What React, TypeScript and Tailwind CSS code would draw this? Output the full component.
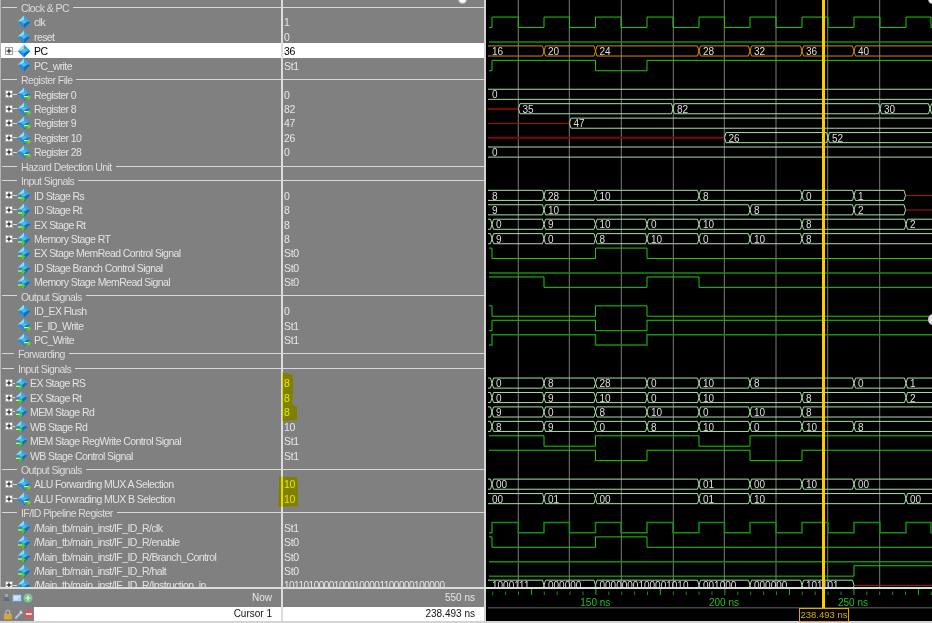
import React from 'react';

type NameRow = {
    label: string;
    group?: boolean;
    groupClass?: string;
    value?: string;
    icon?: 'plain' | 'out' | 'in';
    expand?: boolean;
    shift?: boolean;
    selected?: boolean;
};

const rows: NameRow[] = [
    { label: 'Clock & PC', group: true },
    { label: 'clk', value: '1', icon: 'plain' },
    { label: 'reset', value: '0', icon: 'plain' },
    { label: 'PC', value: '36', icon: 'plain', expand: true, selected: true },
    { label: 'PC_write', value: 'St1', icon: 'plain' },
    { label: 'Register File', group: true },
    { label: 'Register 0', value: '0', icon: 'out', expand: true },
    { label: 'Register 8', value: '82', icon: 'out', expand: true },
    { label: 'Register 9', value: '47', icon: 'out', expand: true },
    { label: 'Register 10', value: '26', icon: 'out', expand: true },
    { label: 'Register 28', value: '0', icon: 'out', expand: true },
    { label: 'Hazard Detection Unit', group: true },
    { label: 'Input Signals', group: true },
    { label: 'ID Stage Rs', value: '0', icon: 'in', expand: true },
    { label: 'ID Stage Rt', value: '8', icon: 'in', expand: true },
    { label: 'EX Stage Rt', value: '8', icon: 'in', expand: true },
    { label: 'Memory Stage RT', value: '8', icon: 'in', expand: true },
    { label: 'EX Stage MemRead Control Signal', value: 'St0', icon: 'in' },
    { label: 'ID Stage Branch Control Signal', value: 'St0', icon: 'in' },
    { label: 'Memory Stage MemRead Signal', value: 'St0', icon: 'in' },
    { label: 'Output Signals', group: true },
    { label: 'ID_EX Flush', value: '0', icon: 'plain' },
    { label: 'IF_ID_Write', value: 'St1', icon: 'out' },
    { label: 'PC_Write', value: 'St1', icon: 'out' },
    { label: 'Forwarding', group: true, groupClass: 'w-[12px]' },
    { label: 'Input Signals', group: true, groupClass: 'w-[12px]' },
    { label: 'EX Stage RS', value: '8', icon: 'in', expand: true, shift: true },
    { label: 'EX Stage Rt', value: '8', icon: 'in', expand: true, shift: true },
    { label: 'MEM Stage Rd', value: '8', icon: 'in', expand: true, shift: true },
    { label: 'WB Stage Rd', value: '10', icon: 'in', expand: true, shift: true },
    { label: 'MEM Stage RegWrite Control Signal', value: 'St1', icon: 'in', shift: true },
    { label: 'WB Stage Control Signal', value: 'St1', icon: 'in', shift: true },
    { label: 'Output Signals', group: true },
    { label: 'ALU Forwarding MUX A Selection', value: '10', icon: 'out', expand: true },
    { label: 'ALU Forwrading MUX B Selection', value: '10', icon: 'out', expand: true },
    { label: 'IF/ID Pipeline Register', group: true },
    { label: '/Main_tb/main_inst/IF_ID_R/clk', value: 'St1', icon: 'in' },
    { label: '/Main_tb/main_inst/IF_ID_R/enable', value: 'St0', icon: 'in' },
    { label: '/Main_tb/main_inst/IF_ID_R/Branch_Control', value: 'St0', icon: 'in' },
    { label: '/Main_tb/main_inst/IF_ID_R/halt', value: 'St0', icon: 'in' },
    { label: '/Main_tb/main_inst/IF_ID_R/Instruction_in', value: '10110100001000100001100000100000', icon: 'in', expand: true },
];

// half clock edges, px
const E = [492, 518.3, 544, 569.5, 595.5, 621, 647, 673, 699, 724.5, 750, 776, 802, 828, 854, 880, 906, 931];
const GRID = [518.3, 569.3, 621.3, 673.3, 724.3, 776, 827.7, 879.7];
const rowY = (row: number) => 14.44 * row + 7.2;

type Bit = { row: number; start: 0 | 1; at: number[]; dark?: boolean };
type Seg = [number, string];
type Bus = { row: number; segs: Seg[]; end?: number; orange?: boolean };
type Red = { row: number; from: number; to: number; thick?: boolean };

const bits: Bit[] = [
    { row: 1, start: 0, at: E },
    { row: 2, start: 0, at: [], dark: true },
    { row: 4, start: 0, at: [492, 595.5, 647] },
    { row: 17, start: 1, at: [492, 595.5, 647] },
    { row: 18, start: 0, at: [], dark: true },
    { row: 19, start: 1, at: [544, 647, 699] },
    { row: 21, start: 1, at: [492, 595.5, 647] },
    { row: 22, start: 0, at: [492, 595.5, 647] },
    { row: 23, start: 0, at: [492, 595.5, 647], dark: true },
    { row: 30, start: 1, at: [544, 595.5, 699, 750] },
    { row: 31, start: 1, at: [595.5, 647, 750, 802] },
    { row: 36, start: 0, at: E, dark: true },
    { row: 37, start: 1, at: [492, 595.5, 647] },
    { row: 38, start: 0, at: [], dark: true },
    { row: 39, start: 0, at: [854] },
];

const buses: Bus[] = [
    { row: 3, orange: true, segs: [[488, '16'], [544, '20'], [595.5, '24'], [699, '28'], [750, '32'], [802, '36'], [854, '40']] },
    { row: 6, segs: [[488, '0']] },
    { row: 7, segs: [[518.5, '35'], [673, '82'], [880, '30'], [930, '']] },
    { row: 8, segs: [[569.5, '47']] },
    { row: 9, segs: [[724.5, '26'], [828, '52']] },
    { row: 10, segs: [[488, '0']] },
    { row: 13, end: 905.5, segs: [[488, '8'], [544, '28'], [595.5, '10'], [699, '8'], [802, '0'], [854, '1']] },
    { row: 14, end: 905.5, segs: [[488, '9'], [544, '10'], [750, '8'], [854, '2']] },
    { row: 15, segs: [[488, ''], [492, '0'], [544, '9'], [595.5, '10'], [647, '0'], [699, '10'], [802, '8'], [906, '2']] },
    { row: 16, segs: [[488, ''], [492, '9'], [544, '0'], [595.5, '8'], [647, '10'], [699, '0'], [750, '10'], [802, '8']] },
    { row: 26, segs: [[488, ''], [492, '0'], [544, '8'], [595.5, '28'], [647, '0'], [699, '10'], [750, '8'], [854, '0'], [906, '1']] },
    { row: 27, segs: [[488, ''], [492, '0'], [544, '9'], [595.5, '10'], [647, '0'], [699, '10'], [802, '8'], [906, '2']] },
    { row: 28, segs: [[488, ''], [492, '9'], [544, '0'], [595.5, '8'], [647, '10'], [699, '0'], [750, '10'], [802, '8']] },
    { row: 29, segs: [[488, ''], [492, '8'], [544, '9'], [595.5, '0'], [647, '8'], [699, '10'], [750, '0'], [802, '10'], [854, '8']] },
    { row: 33, segs: [[488, ''], [492, '00'], [699, '01'], [750, '00'], [802, '10'], [854, '00']] },
    { row: 34, segs: [[488, '00'], [544, '01'], [595.5, '00'], [699, '01'], [750, '10'], [906, '00']] },
    { row: 40, end: 854, segs: [[488, '1000111'], [544, '000000'], [595.5, '0000000100001010'], [699, '001000'], [750, '000000'], [802, '101101']] },
];

const reds: Red[] = [
    { row: 7, from: 488, to: 518.5, thick: true },
    { row: 8, from: 488, to: 569.5 },
    { row: 9, from: 488, to: 724.5, thick: true },
    { row: 13, from: 906, to: 932 },
    { row: 14, from: 906, to: 932 },
    { row: 40, from: 854, to: 932 },
];

function bitPath({ row, start, at }: Bit) {
    const hi = rowY(row) - 4.6;
    const lo = rowY(row) + 5.8;
    let level = start;
    let d = `M489 ${level ? hi : lo}`;
    for (const x of at) {
        level = level ? 0 : 1;
        d += ` H${x} V${level ? hi : lo}`;
    }
    return d + ' H932';
}

function segPath(x0: number, x1: number, c: number, closeEnd: boolean) {
    const top = c - 4.6;
    const bot = c + 5.5;
    const mid = c + 0.5;
    const open = x0 <= 488;
    const a = open ? x0 : x0 + 1.5;
    const b = closeEnd ? x1 - 1.5 : x1;
    let d = open ? `M${a} ${top} H${b}` : `M${x0} ${mid} L${a} ${top} H${b}`;
    d += closeEnd ? ` L${x1} ${mid} L${b} ${bot}` : ` M${b} ${bot}`;
    d += ` H${a}`;
    if (!open) d += ` L${x0} ${mid}`;
    return d;
}

function Diamond({ kind, small }: { kind: 'plain' | 'out' | 'in'; small?: boolean }) {
    return (
        <svg viewBox="0 0 14 14" className={small ? 'h-[13px] w-[13px] shrink-0' : 'h-[14px] w-[14px] shrink-0'}>
            <polygon points="7,0.5 7,5 3.5,6.5 0.5,7" fill="#8adcf8" />
            <polygon points="7,0.5 13.5,7 10.5,6.5 7,5" fill="#2ea8ea" />
            <polygon points="7,5 10.5,6.5 7,9 3.5,6.5" fill="#45bdf2" />
            <polygon points="0.5,7 3.5,6.5 7,9 7,13.5" fill="#1b90dc" />
            <polygon points="13.5,7 10.5,6.5 7,9 7,13.5" fill="#0f6fc0" />
            {kind === 'out' && (
                <>
                    <rect x="7" y="9" width="5" height="1.4" fill="#f4f46a" />
                    <rect x="7" y="10.4" width="5" height="1.4" fill="#3fb83f" />
                    <polygon points="11,7.5 14,10.4 11,13.2" fill="#6fd02f" />
                </>
            )}
            {kind === 'in' && (
                <>
                    <rect x="1" y="9.4" width="6" height="1.4" fill="#e8f060" />
                    <rect x="1" y="10.8" width="6" height="1.4" fill="#35b035" />
                    <polygon points="5,7.6 8.4,10.8 5,13.8" fill="#5cc82c" />
                </>
            )}
        </svg>
    );
}

function Expander() {
    return (
        <span className="flex h-[8px] w-[8px] items-center justify-center border border-[#a0a0a0] bg-white">
            <svg viewBox="0 0 6 6" className="h-[6px] w-[6px]">
                <path d="M0.5 3 H5.5 M3 0.5 V5.5" stroke="#000" strokeWidth="1" />
            </svg>
        </span>
    );
}

function NameCell({ r }: { r: NameRow }) {
    if (r.group) {
        return (
            <div className="flex h-[14.44px] items-center pl-[1px]">
                <span className={`h-px bg-[#d8d8d8] ${r.groupClass ?? 'w-[15px]'}`} />
                <span className="px-[4px] pt-[2px] text-[#dcdcdc]">{r.label}</span>
                <span className="h-px flex-1 bg-[#d8d8d8]" />
            </div>
        );
    }
    return (
        <div className={`flex h-[14.44px] items-center pt-[1px] ${r.selected ? 'bg-white text-black' : 'text-[#e2e2e2]'}`}>
            <span className={`flex shrink-0 items-center pl-[4px] ${r.shift ? 'w-[14px]' : 'w-[16px]'}`}>
                {r.expand && (
                    <>
                        <Expander />
                        <span className="h-px flex-1 bg-[#d8d8d8]" />
                    </>
                )}
            </span>
            <Diamond kind={r.icon ?? 'plain'} small={r.shift} />
            <span className={`whitespace-nowrap pt-[1px] ${r.shift ? 'ml-[2px]' : 'ml-[3px]'}`}>{r.label}</span>
        </div>
    );
}

function ValueCell({ r }: { r: NameRow }) {
    if (r.group) {
        return (
            <div className="flex h-[14.44px] items-center">
                <span className="h-px flex-1 bg-[#d8d8d8]" />
            </div>
        );
    }
    return (
        <div className={`flex h-[14.44px] items-center whitespace-nowrap pl-[1px] pt-[2px] ${r.selected ? 'bg-white text-black' : 'text-[#e6e6e6]'}`}>
            <span className={r.value && r.value.length > 8 ? 'text-[10px] tracking-[-0.5px]' : 'tracking-[-0.3px]'}>{r.value}</span>
        </div>
    );
}

function Waves() {
    return (
        <svg viewBox="486 0 446 587" className="block h-[587px] w-[446px] bg-black tracking-normal">
            {GRID.map((x) => (
                <line key={x} x1={x} x2={x} y1="0" y2="587" stroke="#7c7c7c" strokeWidth="1" />
            ))}
            {reds.map((r) => (
                <line
                    key={r.row}
                    x1={r.from}
                    x2={r.to}
                    y1={rowY(r.row) + 0.6}
                    y2={rowY(r.row) + 0.6}
                    stroke={r.thick ? '#800808' : '#b01414'}
                    strokeWidth={r.thick ? 2 : 1}
                />
            ))}
            {bits.map((b) => (
                <path
                    key={b.row}
                    d={bitPath(b)}
                    fill="none"
                    stroke={b.dark ? '#12900e' : '#20cc00'}
                    strokeWidth={b.dark ? 1.5 : 1}
                />
            ))}
            {buses.map((b) =>
                b.segs.map(([x, label], i) => {
                    const next = i + 1 < b.segs.length ? b.segs[i + 1][0] : (b.end ?? 933);
                    const c = rowY(b.row);
                    return (
                        <g key={`${b.row}-${x}`}>
                            <path
                                d={segPath(x, next, c, next < 933)}
                                fill="none"
                                stroke={b.orange ? '#d88c00' : '#a8dea8'}
                                strokeWidth="1"
                            />
                            <text x={x + 4} y={c + 4.6} className="fill-[#dedede] text-[10px]">
                                {label}
                            </text>
                        </g>
                    );
                })
            )}
            <rect x="822" y="0" width="3" height="587" fill="#ffcc00" />
        </svg>
    );
}

function Ruler() {
    const ticks = Array.from({ length: 35 }, (_, k) => k);
    return (
        <div className="relative h-[32px] w-[446px] bg-black tracking-normal">
            <svg viewBox="486 589 446 32" className="block h-[32px] w-[446px]">
                {ticks.map((k) => {
                    const x = 492.7 + 12.9 * k;
                    const long = (k - 3) % 5 === 0;
                    return (
                        <line
                            key={k}
                            x1={x}
                            x2={x}
                            y1={long ? 589 : 591.5}
                            y2="595"
                            stroke={long ? '#18b818' : '#128a12'}
                            strokeWidth="1"
                        />
                    );
                })}
                <text x="595.3" y="606" textAnchor="middle" className="fill-[#22c022] text-[10px]">150 ns</text>
                <text x="724" y="606" textAnchor="middle" className="fill-[#22c022] text-[10px]">200 ns</text>
                <text x="853" y="606" textAnchor="middle" className="fill-[#22c022] text-[10px]">250 ns</text>
                <line x1="488" x2="932" y1="607.7" y2="607.7" stroke="#444" strokeWidth="1.5" />
                <rect x="822" y="589" width="3" height="19" fill="#ffcc00" />
            </svg>
            <div className="absolute left-[313px] top-[19px] flex h-[14px] w-[50px] items-center justify-center whitespace-nowrap border border-[#e0a800] bg-black text-[9.5px] text-[#e0b000]">
                238.493 ns
            </div>
        </div>
    );
}

function ToolIcons() {
    return (
        <div className="flex items-center gap-[1px] pl-[1px]">
            <svg viewBox="0 0 10 10" className="h-[10px] w-[10px]">
                <path d="M2 8 L4 3 H7 L9 8 Z" fill="#5f7080" />
                <rect x="4" y="1" width="3" height="3" fill="#9aa8b4" />
            </svg>
            <svg viewBox="0 0 10 10" className="h-[10px] w-[10px]">
                <rect x="0.5" y="1.5" width="9" height="7" fill="#b8d0f0" stroke="#6a8cc0" strokeWidth="0.8" />
                <path d="M2 4 H8 M2 6 H6" stroke="#f0f4ff" strokeWidth="1" />
            </svg>
            <svg viewBox="0 0 10 10" className="h-[10px] w-[10px]">
                <circle cx="5" cy="5" r="4.5" fill="#7cc88c" />
                <path d="M2.5 5 H7.5 M5 2.5 V7.5" stroke="#eef" strokeWidth="1.2" />
            </svg>
        </div>
    );
}

function CursorIcons() {
    return (
        <div className="flex w-[34px] shrink-0 items-center gap-[1px] pl-[3px]">
            <svg viewBox="0 0 10 11" className="h-[11px] w-[10px]">
                <path d="M3 5 V3 A2 2 0 0 1 7 3 V5" fill="none" stroke="#c8c8c8" strokeWidth="1" />
                <rect x="1" y="5" width="8" height="5.5" fill="#d8a838" />
            </svg>
            <svg viewBox="0 0 10 11" className="h-[11px] w-[10px]">
                <path d="M1.5 9.5 L6.5 4" stroke="#b8c4e0" strokeWidth="2" />
                <path d="M6 2 L8 1 L7.5 3 L9 3.5 L8 5 L6 4.5 Z" fill="#d8e0f0" />
            </svg>
            <svg viewBox="0 0 10 10" className="h-[10px] w-[10px]">
                <circle cx="5" cy="5" r="4.5" fill="#d85858" />
                <rect x="2" y="4" width="6" height="2" fill="#f4e0e0" />
            </svg>
        </div>
    );
}

export default function App() {
    return (
        <div className="relative h-[623px] w-[932px] overflow-hidden bg-[#808080] font-['Liberation_Sans',sans-serif] text-[10.5px] leading-none tracking-[-0.58px] blur-[0.3px]">
            <div className="flex h-[587px] border-l border-[#b4b4b4]">
                <div className="h-full w-[280px] overflow-hidden">
                    {rows.map((r, i) => (
                        <NameCell key={i} r={r} />
                    ))}
                </div>
                <div className="w-[2px] bg-[#dcdcdc]" />
                <div className="h-full w-[201px] overflow-hidden">
                    {rows.map((r, i) => (
                        <ValueCell key={i} r={r} />
                    ))}
                </div>
                <div className="w-[2px] bg-[#d4d4d4]" />
                <Waves />
            </div>
            <div className="h-[2px] w-full bg-[#dcdcdc]" />
            <div className="flex h-[32px]">
                <div className="flex w-[281px] flex-col">
                    <div className="flex h-[18px] items-center justify-between pr-[9px] text-[10px] tracking-normal text-[#e6e6e6]">
                        <ToolIcons />
                        <span>Now</span>
                    </div>
                    <div className="flex h-[14px] items-center text-[10px] tracking-normal">
                        <CursorIcons />
                        <div className="flex h-full flex-1 items-center justify-end bg-white pr-[9px] text-[#111]">Cursor 1</div>
                    </div>
                </div>
                <div className="w-[2px] bg-[#dcdcdc]" />
                <div className="flex w-[201px] flex-col text-[10px] tracking-normal">
                    <div className="flex h-[18px] items-center justify-end pr-[9px] text-[#e6e6e6]">550 ns</div>
                    <div className="flex h-[14px] items-center justify-end bg-white pr-[9px] text-[#111]">238.493 ns</div>
                </div>
                <div className="w-[2px] bg-[#d4d4d4]" />
                <Ruler />
            </div>
            <div className="h-[2px] w-full bg-[#d4d4d4]" />

            {/* yellow marker strokes on the value column */}
            <svg viewBox="0 0 932 623" className="pointer-events-none absolute inset-0 h-[623px] w-[932px] mix-blend-multiply">
                <path d="M282 372.5 L293 375 V392 L292 404 L297 407 V420 L282 421 Z" fill="#ffff00" />
                <path d="M279 476.5 L297 477 L298 490 L298 506 L278 507 L279 492 Z" fill="#ffff00" />
            </svg>

            {/* cropped annotation circles */}
            <div className="absolute left-[458px] top-[-5px] h-[9px] w-[9px] rounded-full border border-[#b0b0b0] bg-white" />
            <div className="absolute left-[928px] top-[-5px] h-[9px] w-[9px] rounded-full border border-[#b0b0b0] bg-white" />
            <div className="absolute left-[928px] top-[314px] h-[11px] w-[11px] rounded-full border-2 border-[#d8d8d8] bg-[#e8e8e8]" />
        </div>
    );
}
